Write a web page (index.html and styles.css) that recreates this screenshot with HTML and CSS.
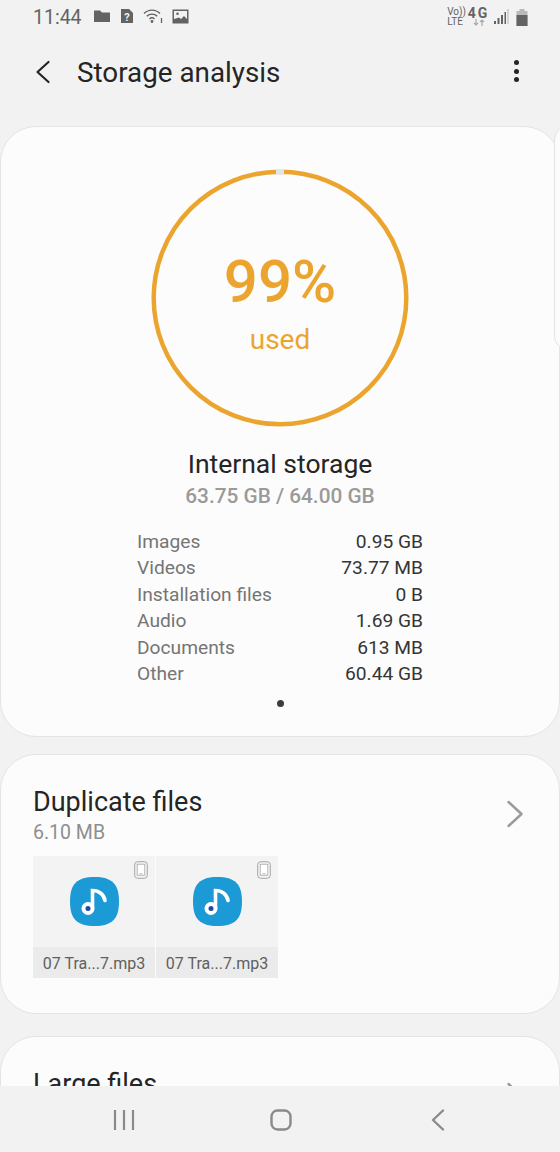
FILE: index.html
```html
<!DOCTYPE html>
<html lang="en">

<head>
    <meta charset="UTF-8">
    <meta name="viewport" content="width=device-width, initial-scale=1.0">
    <title>Storage analysis</title>
    <link rel="stylesheet" href="styles.css">
</head>

<body>
    <!-- status bar -->
    <div class="status-bar">
        <span class="status-time">11:44</span>
        <svg class="status-icon" width="18" height="14" viewBox="0 0 18 14"><path d="M1 1.500h6l2 2h8v9.500H1z" fill="#636363"/></svg>
        <svg class="status-icon" width="14" height="16" viewBox="0 0 14 16"><path d="M1 1h8l4 4v10H1z" fill="#636363"/><text x="7" y="12.500" text-anchor="middle" class="sim-mark">?</text></svg>
        <svg class="status-icon" width="20" height="16" viewBox="0 0 20 16" fill="none" stroke="#636363" stroke-width="1.300"><path d="M1 5.500c4.500-4.500 11.500-4.500 16 0"/><path d="M3.700 8.300c3-3 7.600-3 10.600 0"/><path d="M6.500 11c1.400-1.400 3.600-1.400 5 0"/><circle cx="9" cy="13.500" r=".8" fill="#636363"/><path d="M18.500 10v5"/></svg>
        <svg class="status-icon" width="17" height="15" viewBox="0 0 17 15"><path d="M0.500 0.500h16v14h-16z" fill="#636363"/><path d="M2 2h13v8l-3-3-3 3-2-1.500L2 10z" fill="#f2f2f2"/><circle cx="5.500" cy="4.800" r="1.300" fill="#636363"/></svg>
        <div class="status-right">
            <div class="volte">Vo))<br>LTE</div>
            <div class="net">
                <span class="net-label">4G</span>
                <svg width="12" height="7" viewBox="0 0 12 7" fill="none" stroke="#a8a8a8" stroke-width="1.200"><path d="M3 0v6M1 4l2 2 2-2M9 7V1M7 3l2-2 2 2"/></svg>
            </div>
            <svg class="signal" width="15" height="16" viewBox="0 0 15 16"><path d="M0 12h2v3H0z" fill="#636363"/><path d="M3.500 9h2v6h-2z" fill="#636363"/><path d="M7 6h2v9H7z" fill="#636363"/><path d="M10.500 3h1.500v12h-1.500z" fill="#636363"/><path d="M13.500 0h1v15h-1z" fill="#b5b5b5"/></svg>
            <svg class="battery" width="12" height="17" viewBox="0 0 12 17"><path d="M3.500 0h5v2h3v15H0.500V2h3z" fill="#b9b9b9"/><path d="M0.500 6h11v11H0.500z" fill="#636363"/></svg>
        </div>
    </div>

    <!-- toolbar -->
    <div class="toolbar">
        <svg class="back-icon" width="16" height="24" viewBox="0 0 16 24" fill="none" stroke="#252525" stroke-width="2.200" stroke-linecap="round" stroke-linejoin="round"><path d="M13.500 2 2.500 12l11 10"/></svg>
        <div class="toolbar-title">Storage analysis</div>
        <div class="more-btn"><i></i><i></i><i></i></div>
    </div>

    <div class="content">
        <div class="pager">
            <div class="card storage-card">
                <div class="ring">
                    <svg width="258" height="258" viewBox="0 0 258 258">
                        <circle cx="129" cy="129" r="126.300" fill="none" stroke="#eba52f" stroke-width="4.500"/>
                        <rect x="125" y="0" width="8" height="6" fill="#e4e6e4"/>
                    </svg>
                    <div class="ring-text">
                        <div class="ring-percent">99%</div>
                        <div class="ring-used">used</div>
                    </div>
                </div>
                <div class="storage-name">Internal storage</div>
                <div class="storage-size">63.75 GB / 64.00 GB</div>
                <ul class="usage-list">
                    <li><span>Images</span><b>0.95 GB</b></li>
                    <li><span>Videos</span><b>73.77 MB</b></li>
                    <li><span>Installation files</span><b>0 B</b></li>
                    <li><span>Audio</span><b>1.69 GB</b></li>
                    <li><span>Documents</span><b>613 MB</b></li>
                    <li><span>Other</span><b>60.44 GB</b></li>
                </ul>
                <div class="page-dot"></div>
            </div>
            <!-- next page of the pager, lies over the first card -->
            <div class="card peek-card"></div>
        </div>

        <div class="card files-card">
            <div class="files-head">
                <div>
                    <div class="files-title">Duplicate files</div>
                    <div class="files-size">6.10 MB</div>
                </div>
                <svg class="chevron" width="18" height="28" viewBox="0 0 18 28" fill="none" stroke="#9a9a9a" stroke-width="2.400" stroke-linecap="round" stroke-linejoin="round"><path d="M2.500 2 15.500 14 2.500 26"/></svg>
            </div>
            <div class="thumbs">
                <div class="thumb">
                    <div class="thumb-img">
                        <svg class="phone-icon" width="14" height="18" viewBox="0 0 14 18" fill="none" stroke="#a6a6a6"><rect x="0.700" y="0.700" width="12.600" height="16.600" rx="3"/><rect x="3.200" y="3.200" width="7.600" height="11" fill="#fff" stroke-width=".8"/><path d="M5.500 12.800h3" stroke-width=".8"/></svg>
                        <svg class="music-icon" width="49" height="49" viewBox="0 0 49 49"><path d="M24.500 0C42 0 49 7 49 24.500S42 49 24.500 49 0 42 0 24.500 7 0 24.500 0z" fill="#1b9ad6"/><path d="M22.500 31.500V13.500c6.500 0 11.500 4 12.500 10" fill="none" stroke="#fff" stroke-width="3.600" stroke-linecap="round"/><circle cx="18" cy="31.500" r="6.500" fill="#fff"/><circle cx="18" cy="31.500" r="2.500" fill="#2147a8"/></svg>
                    </div>
                    <div class="thumb-name">07 Tra...7.mp3</div>
                </div>
                <div class="thumb">
                    <div class="thumb-img">
                        <svg class="phone-icon" width="14" height="18" viewBox="0 0 14 18" fill="none" stroke="#a6a6a6"><rect x="0.700" y="0.700" width="12.600" height="16.600" rx="3"/><rect x="3.200" y="3.200" width="7.600" height="11" fill="#fff" stroke-width=".8"/><path d="M5.500 12.800h3" stroke-width=".8"/></svg>
                        <svg class="music-icon" width="49" height="49" viewBox="0 0 49 49"><path d="M24.500 0C42 0 49 7 49 24.500S42 49 24.500 49 0 42 0 24.500 7 0 24.500 0z" fill="#1b9ad6"/><path d="M22.500 31.500V13.500c6.500 0 11.500 4 12.500 10" fill="none" stroke="#fff" stroke-width="3.600" stroke-linecap="round"/><circle cx="18" cy="31.500" r="6.500" fill="#fff"/><circle cx="18" cy="31.500" r="2.500" fill="#2147a8"/></svg>
                    </div>
                    <div class="thumb-name">07 Tra...7.mp3</div>
                </div>
            </div>
        </div>

        <div class="card files-card">
            <div class="files-head">
                <div>
                    <div class="files-title">Large files</div>
                </div>
                <svg class="chevron" width="18" height="28" viewBox="0 0 18 28" fill="none" stroke="#9a9a9a" stroke-width="2.400" stroke-linecap="round" stroke-linejoin="round"><path d="M2.500 2 15.500 14 2.500 26"/></svg>
            </div>
        </div>
    </div>

    <!-- nav bar -->
    <div class="nav-bar">
        <svg class="nav-recent" width="22" height="20" viewBox="0 0 22 20" stroke="#8a8a8a" stroke-width="2.200"><path d="M2 0v20M11 0v20M20 0v20"/></svg>
        <svg class="nav-home" width="22" height="22" viewBox="0 0 22 22" fill="none" stroke="#8a8a8a" stroke-width="2.400"><rect x="1.500" y="1.500" width="19" height="19" rx="6"/></svg>
        <svg width="14" height="22" viewBox="0 0 14 22" fill="none" stroke="#8a8a8a" stroke-width="2.400" stroke-linecap="round" stroke-linejoin="round"><path d="M12 1.500 2 11l10 9.500"/></svg>
    </div>
</body>

</html>
```

FILE: styles.css
```css
* {
    box-sizing: border-box;
}

html,
body {
    margin: 0;
    padding: 0;
}

body {
    width: 560px;
    height: 1152px;
    display: flex;
    flex-direction: column;
    overflow: hidden;
    background: #f2f2f2;
    color: #252525;
    font-family: Roboto, "Liberation Sans", sans-serif;
}

.status-bar {
    height: 34px;
    flex: none;
    display: flex;
    align-items: center;
    padding: 0 32px 0 33px;
}

.status-time {
    font-size: 19.500px;
    color: #636363;
    margin-right: 11px;
}

.status-icon {
    margin-right: 9px;
    margin-top: -2px;
}

.sim-mark {
    font-size: 11px;
    font-weight: 700;
    fill: #f2f2f2;
    font-family: Roboto, sans-serif;
}

.status-right {
    margin-left: auto;
    display: flex;
    align-items: center;
    gap: 2px;
}

.volte {
    font-size: 10px;
    line-height: 10px;
    color: #636363;
}

.net {
    display: flex;
    flex-direction: column;
    align-items: center;
    width: 21px;
}

.net-label {
    font-size: 14px;
    line-height: 11px;
    font-weight: 700;
    letter-spacing: 2px;
    color: #636363;
}

.signal {
    margin-left: 3px;
}

.battery {
    margin-left: 5px;
}

.toolbar {
    height: 76px;
    flex: none;
    display: flex;
    align-items: center;
    padding: 0 41px 0 35px;
}

.back-icon {
    margin-right: 26px;
}

.toolbar-title {
    font-size: 27.800px;
    color: #252525;
    margin-top: 1px;
}

.more-btn {
    margin-left: auto;
    margin-top: -2px;
    display: flex;
    flex-direction: column;
    gap: 3.300px;
}

.more-btn i {
    display: block;
    width: 5px;
    height: 5px;
    border-radius: 50%;
    background: #252525;
}

.content {
    height: 976px;
    flex: none;
    padding-top: 16px;
    overflow: hidden;
}

.card {
    background: #fcfcfc;
    border: 1px solid #e4e4e4;
    border-radius: 36px;
}

.pager {
    position: relative;
    margin-bottom: 17px;
}

.storage-card {
    height: 611px;
    display: flex;
    flex-direction: column;
    align-items: center;
    padding-top: 42px;
}

.peek-card {
    position: absolute;
    top: 0;
    left: 554px;
    width: 40px;
    height: 224px;
    border-radius: 14px;
}

.ring {
    position: relative;
    width: 258px;
    height: 258px;
}

.ring-text {
    position: absolute;
    top: 0;
    left: 0;
    width: 100%;
    height: 100%;
    display: flex;
    flex-direction: column;
    align-items: center;
    padding-top: 76px;
    color: #eba52f;
}

.ring-percent {
    font-size: 60px;
    line-height: 74px;
    font-weight: 500;
}

.ring-used {
    font-size: 28px;
    line-height: 40px;
    margin-top: 1px;
}

.storage-name {
    font-size: 26.500px;
    line-height: 36px;
    margin-top: 19px;
}

.storage-size {
    font-size: 20.800px;
    line-height: 26px;
    font-weight: 500;
    color: #9a9a9a;
    margin-top: 1px;
}

.usage-list {
    list-style: none;
    margin: 20px 0 0 0;
    padding: 0;
    width: 286px;
}

.usage-list li {
    display: flex;
    justify-content: space-between;
    font-size: 19.200px;
    line-height: 26.400px;
}

.usage-list span {
    color: #757575;
}

.usage-list b {
    font-weight: 400;
    color: #353535;
}

.page-dot {
    width: 7px;
    height: 7px;
    border-radius: 50%;
    background: #3c3c3c;
    margin-top: 13px;
}

.files-card {
    height: 260px;
    margin-bottom: 22px;
    padding: 31px 35px 0 32px;
}

.files-head {
    display: flex;
    justify-content: space-between;
    align-items: flex-start;
}

.files-title {
    font-size: 27px;
    line-height: 32px;
}

.files-size {
    font-size: 19.500px;
    line-height: 26px;
    color: #8e8e8e;
    margin-top: 2px;
}

.chevron {
    margin-top: 14px;
}

.thumbs {
    display: flex;
    gap: 1px;
    margin-top: 10px;
}

.thumb {
    width: 122px;
    background: #f3f3f3;
}

.thumb-img {
    position: relative;
    height: 91px;
    display: flex;
    align-items: center;
    justify-content: center;
}

.phone-icon {
    position: absolute;
    top: 5px;
    right: 7px;
}

.thumb-name {
    height: 31px;
    background: #ebebeb;
    font-size: 16px;
    line-height: 33px;
    color: #5f5f5f;
    text-align: center;
    white-space: nowrap;
}

.nav-bar {
    height: 66px;
    flex: none;
    display: flex;
    align-items: center;
    padding: 2px 0 0 113px;
}

.nav-recent {
    margin-right: 135px;
}

.nav-home {
    margin-right: 139px;
}
```
